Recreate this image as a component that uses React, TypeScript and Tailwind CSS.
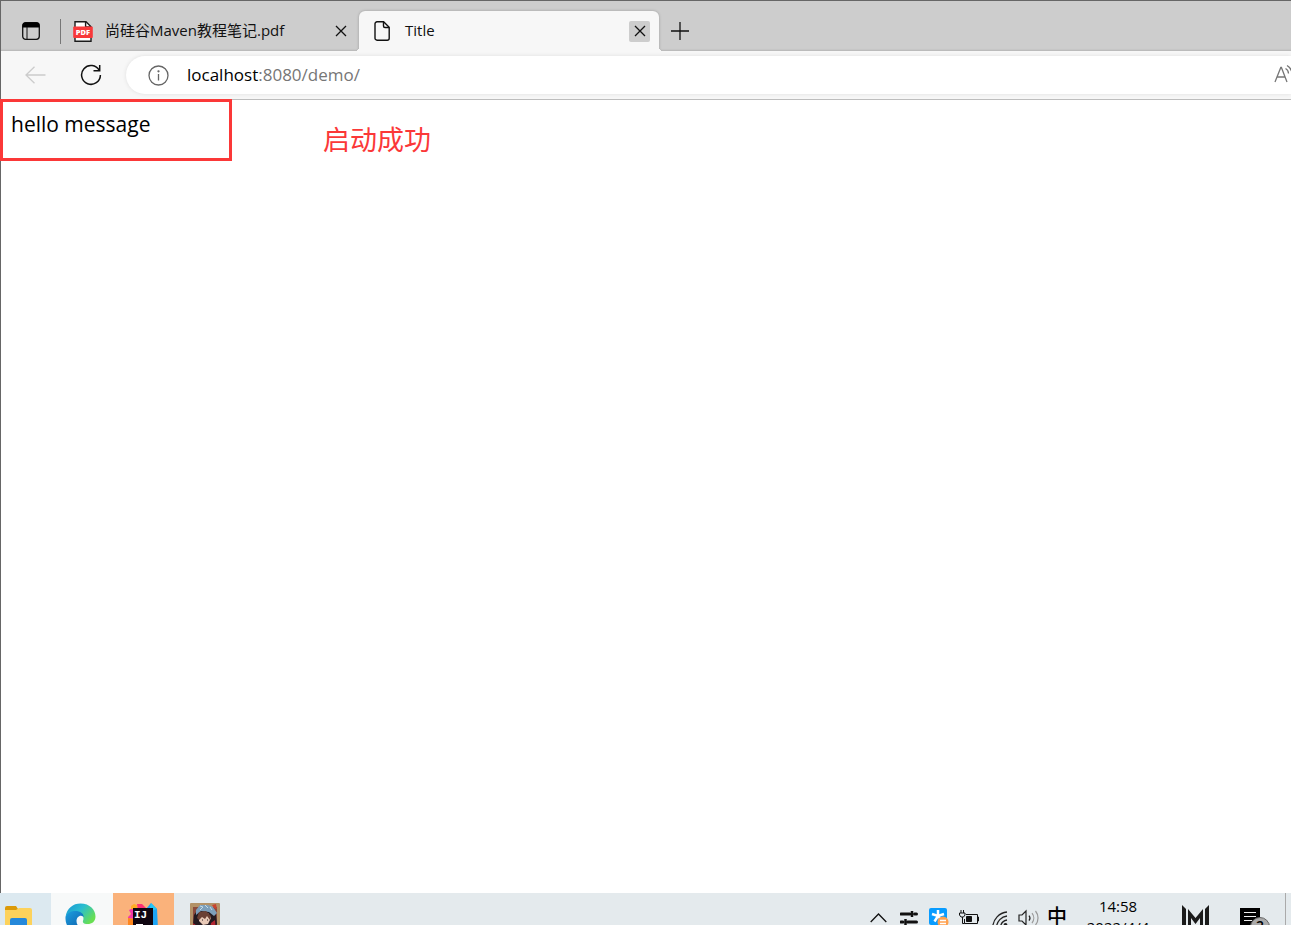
import { useState } from 'react';

type TabItem = { id: string; title: string; kind: 'pdf' | 'page' };

const initialTabs: TabItem[] = [
  { id: 'pdf', title: '尚硅谷Maven教程笔记.pdf', kind: 'pdf' },
  { id: 'demo', title: 'Title', kind: 'page' },
];

const CloseIcon = () => (
  <svg width="12" height="12" viewBox="0 0 12 12" fill="none" stroke="#111" strokeWidth="1.3">
    <path d="M1 1l10 10M11 1L1 11" />
  </svg>
);

const PdfIcon = () => (
  <svg width="20" height="21" viewBox="0 0 20 21" fill="none" className="shrink-0">
    <path d="M2 .8h11l5 5v14.4H2z" fill="#fff" stroke="#1b1b1b" strokeWidth="1.4" />
    <path d="M12.6 1v5H18" stroke="#1b1b1b" strokeWidth="1.4" />
    <rect x=".2" y="5.5" width="19.6" height="11.5" rx="1" fill="#f8383a" />
    <text x="10" y="14" textAnchor="middle" fill="#fff" fontSize="7.5" fontWeight="900" fontFamily="Open Sans, sans-serif">PDF</text>
  </svg>
);

const PageIcon = () => (
  <svg width="17" height="20" viewBox="0 0 17 20" fill="none" stroke="#111" strokeWidth="1.4" className="shrink-0">
    <path d="M3 .8h6.6l5.6 5.5v10.9a2 2 0 0 1-2 2H3a2 2 0 0 1-2-2V2.8a2 2 0 0 1 2-2z" />
    <path d="M9.5 1v4a1.5 1.5 0 0 0 1.5 1.5h4" />
  </svg>
);

function TabStrip() {
  const [tabs] = useState(initialTabs);
  return (
    <div className="flex h-[51px] items-end border-t border-[#666] bg-[#cdcdcd] shadow-[inset_0_-2px_2px_-1px_rgba(0,0,0,0.12)]">
      <button aria-label="Tab actions" className="flex h-10 w-[59px] items-center justify-center">
        <svg width="18" height="18" viewBox="0 0 18 18" fill="none">
          <rect x=".7" y=".7" width="16.6" height="16.6" rx="3" stroke="#111" strokeWidth="1.3" />
          <path d="M.5 5.5V3.5a3 3 0 0 1 3-3h11a3 3 0 0 1 3 3v2z" fill="#000" />
          <path d="M5 5v12" stroke="#111" />
        </svg>
      </button>
      <div className="mb-[7px] h-[25px] w-px bg-[#777]" />
      {tabs.map((tab) =>
        tab.kind === 'pdf' ? (
          <div key={tab.id} className="flex h-10 w-[298px] items-center pl-3 pr-2">
            <PdfIcon />
            <span className="ml-3 flex-1 truncate pb-px text-[15px] text-[#111]">{tab.title}</span>
            <button aria-label="Close tab" className="flex size-[21px] items-center justify-center"><CloseIcon /></button>
          </div>
        ) : (
          <div key={tab.id} className="relative flex h-10 w-[300px] items-center rounded-t-md bg-[#f7f7f7] pl-[15px] pr-[9px] shadow-[0_0_3px_rgba(0,0,0,0.25)] before:absolute before:bottom-0 before:-left-1 before:size-1 before:bg-[radial-gradient(circle_at_0_0,transparent_4px,#f7f7f7_4px)] after:absolute after:bottom-0 after:-right-1 after:size-1 after:bg-[radial-gradient(circle_at_100%_0,transparent_4px,#f7f7f7_4px)]">
            <PageIcon />
            <span className="ml-[14px] flex-1 pb-px text-[15px] text-[#111]">{tab.title}</span>
            <button aria-label="Close tab" className="flex size-[21px] items-center justify-center rounded-xs bg-[#cdcdcd]"><CloseIcon /></button>
          </div>
        )
      )}
      <button aria-label="New tab" className="flex h-10 w-[42px] items-center justify-center">
        <svg width="18" height="18" viewBox="0 0 18 18" stroke="#111" strokeWidth="1.3"><path d="M9 0v18M0 9h18" /></svg>
      </button>
    </div>
  );
}

function Toolbar() {
  return (
    <div className="relative flex h-[49px] items-center border-b border-[#bdbdbd] bg-[#f7f7f7] pl-[22px]">
      <button aria-label="Back" disabled className="flex w-6 justify-center">
        <svg width="21" height="18" viewBox="0 0 21 18" fill="none" stroke="#ccc" strokeWidth="1.3"><path d="M20.5 9H1M9.5 .7L1 9l8.5 8.3" /></svg>
      </button>
      <button aria-label="Refresh" className="ml-8 flex w-6 justify-center">
        <svg width="22" height="22" viewBox="0 0 22 22" fill="none" stroke="#111" strokeWidth="1.5">
          <path d="M19.3 6.5A9.4 9.4 0 1 0 20.4 11" />
          <path d="M19.7 1v5.8H13.5" />
        </svg>
      </button>
      <div className="ml-[23px] flex h-[38px] flex-1 items-center overflow-hidden rounded-l-full bg-white pl-[22px] shadow-[0_0_4px_rgba(0,0,0,0.1)]">
        <svg width="21" height="21" viewBox="0 0 21 21" fill="none" stroke="#666" strokeWidth="1.3" className="shrink-0">
          <circle cx="10.5" cy="10.5" r="9.5" />
          <path d="M10.5 9v6.5" />
          <circle cx="10.5" cy="6.3" r=".5" fill="#666" />
        </svg>
        <a href="#demo" className="ml-[18px] flex-1 pb-px text-[17px] text-[#767676]"><span className="text-black">localhost</span>:8080/demo/</a>
        <button aria-label="Read aloud" className="h-[22px] w-[17px] overflow-hidden">
          <svg width="22" height="22" viewBox="0 0 22 22" fill="none" stroke="#777" strokeWidth="1.3">
            <path d="M1 18L6.8 3.5h.6L13 18M3 13h8.2M11.5 4.5a6 6 0 0 1 3 5M13 1.5a10 10 0 0 1 5 8" />
          </svg>
        </button>
      </div>
    </div>
  );
}

const FolderIcon = () => (
  <svg width="28" height="28" viewBox="0 0 28 28">
    <path d="M0 2q0-2 2-2h9l2 3v3H0z" fill="#dc9a08" />
    <path d="M0 4h11l3-2h11q2 0 2 2v24H0z" fill="#fdd25b" />
    <path d="M5 28V14q0-2 2-2h13q2 0 2 2v14h-5v-9h-7v9z" fill="#2588da" />
  </svg>
);

const EdgeIcon = () => (
  <svg width="31" height="31" viewBox="0 0 31 31">
    <defs>
      <linearGradient id="edgeTop" x1="0" y1="0" x2="1" y2=".6">
        <stop stopColor="#1694d6" /><stop offset=".5" stopColor="#2abdd0" /><stop offset="1" stopColor="#68df52" />
      </linearGradient>
      <linearGradient id="edgeLow" x1="0" y1="0" x2="1" y2="1">
        <stop stopColor="#1b9fe0" /><stop offset="1" stopColor="#0b4d9c" />
      </linearGradient>
    </defs>
    <path d="M.5 14C2 5 8 .5 15.5 .5 25 .5 30.5 7 30.5 13.5c0 5-3.5 7.5-8 7.5-4 0-5-1.5-4.500-3 2-5-2-8-7-8-5 0-9 2-10.500 4z" fill="url(#edgeTop)" />
    <path d="M.5 14C3 9 7 8 10 8c6 0 9 3 8.5 6-3-3-7 0-7 4 0 6 6 9 13 6-3 4-7 5.5-10 5.5C6 30.5 0 23 .5 14z" fill="url(#edgeLow)" />
  </svg>
);

const IdeaIcon = () => (
  <svg width="31" height="31" viewBox="0 0 31 31">
    <path d="M1 7l6-3 8 3-2 10-14-2 4-4z" fill="#f438a8" />
    <path d="M0 15l7 1v12l-7-5z" fill="#ff861c" />
    <path d="M3 3l3-2 3 1 2 5-8-1z" fill="#ffac24" />
    <path d="M9 1l5 0 5 5-9 2z" fill="#ff3174" />
    <path d="M18 6l5-6 6 6 1 20-10 5z" fill="#1da5f5" />
    <path d="M23 0l6 6-8 3z" fill="#25c6f5" />
    <rect x="5" y="5" width="20" height="26" fill="#100611" />
    <text x="6" y="15" fill="#fff" fontSize="11" fontWeight="700" fontFamily="Liberation Mono, monospace">IJ</text>
    <path d="M8 22h7" stroke="#fff" strokeWidth="2" />
  </svg>
);

const PortraitIcon = () => (
  <svg width="30" height="30" viewBox="0 0 30 30">
    <rect width="30" height="30" rx="1" fill="#b39267" />
    <path d="M3 4h24v26H3z" fill="#8c4b3c" />
    <path d="M4 12l5-7 12 0 5 6 1 10-3 6H6l-3-6z" fill="#241a20" />
    <path d="M6 7l4-5h8l5 2 4 6-3 3-5-4-8-1-5 4z" fill="#7d9fba" />
    <path d="M10 3l3 1-3 3M15 2l3 3M20 4l2 3" stroke="#c3dbe8" fill="none" />
    <path d="M22 2l4-1 1 5-3-1z" fill="#c9432f" />
    <path d="M9 13l9-3 3 5-3 6-5 1-4-4z" fill="#e8c9b7" />
    <path d="M7 15l2-6 7-1 5 5-1 4-3-4-2 3-3-2-3 3z" fill="#6b4034" />
    <path d="M12 17h1M17 17h1" stroke="#25181c" />
    <path d="M3 20l4 3 4 7H4zM21 20l4-3 1 12h-6z" fill="#b12531" />
    <path d="M12 22l5 1 1 7h-5z" fill="#ddd" />
  </svg>
);

function Tray() {
  return (
    <div className="flex items-start">
      <button aria-label="Show hidden icons" className="mt-5 w-[30px]">
        <svg width="17" height="10" viewBox="0 0 17 10" fill="none" stroke="#111" strokeWidth="1.3"><path d="M.7 9L8.5 1l7.8 8" /></svg>
      </button>
      <button aria-label="Mixer" className="mt-[17px] w-[29px]">
        <svg width="18" height="18" viewBox="0 0 18 18" fill="none" stroke="#111" strokeWidth="3">
          <path d="M1 4h9M14.5 4h2M1 12h2M7.5 12h9" strokeLinecap="round" /><path d="M12 1v6M5.5 9v6" strokeWidth="2.5" />
        </svg>
      </button>
      <button aria-label="Cloud sync" className="mt-[15px] w-[30px]">
        <svg width="20" height="20" viewBox="0 0 20 20" fill="none">
          <rect width="18" height="17" rx="2" fill="#089cff" />
          <path d="M9 2v6M3 6l6 2 6-2M9 8L5.5 13.5M9 8l3.5 4" stroke="#fff" strokeWidth="2.5" />
          <circle cx="14" cy="14" r="5.5" fill="#ffa14f" /><path d="M11 12.5h6M11 15.5h6" stroke="#fff" strokeWidth="1.3" />
        </svg>
      </button>
      <button aria-label="Battery" className="mt-[17px] w-[33px]">
        <svg width="21" height="16" viewBox="0 0 21 16" fill="none" stroke="#111">
          <path d="M7 4.5h11.5v9h-13V9M18.5 7h1v4h-1M2 0v3M4.5 0v3M.5 3h5.5v2l-1.5 2H2L.5 5zM3.5 7v6.5h2" />
          <path d="M7.5 6.5h5v5h-5z" fill="#111" />
        </svg>
      </button>
      <button aria-label="Network" className="mt-[17px] w-[26px]">
        <svg width="18" height="18" viewBox="0 0 18 18" fill="none" stroke="#222" strokeWidth="1.3">
          <path d="M.7 17A16 16 0 0 1 15 2M4.5 17A12 12 0 0 1 15 6M8.5 17A8 8 0 0 1 15 10" /><circle cx="13.5" cy="15" r="1.3" fill="#222" />
        </svg>
      </button>
      <button aria-label="Volume" className="mt-4 w-[29px]">
        <svg width="21" height="18" viewBox="0 0 21 18" fill="none" stroke="#222" strokeWidth="1.2">
          <path d="M1 6h3l4-4v14l-4-4H1z" /><path d="M11 6.5a4 4 0 0 1 0 5" /><path d="M14 4a8 8 0 0 1 0 10M17.5 2a11 11 0 0 1 0 14" stroke="#999" />
        </svg>
      </button>
      <button aria-label="Input language" className="mt-3 w-[29px] text-left text-[20px] font-medium leading-6">中</button>
      <button className="mt-[3px] w-[84px] text-center text-[15px] leading-[21px]">
        <time className="block">14:58</time>
        <time className="block">2022/4/4</time>
      </button>
      <button aria-label="Monitor" className="ml-[22px] mt-3 w-[58px]">
        <svg width="27" height="27" viewBox="0 0 27 27" fill="#1b1b1b">
          <path d="M0 0l4 4v23H0zM27 0l-4 4v23h4z" /><path d="M6 4l7.5 9L21 4v23h-3V13l-4.5 6L9 13v14H6z" />
        </svg>
      </button>
      <button aria-label="Notifications" className="mt-[15px] w-[45px]">
        <svg width="30" height="27" viewBox="0 0 30 27">
          <path d="M0 0h20v20H0z" fill="#000" /><path d="M4 4.5h12M4 8.5h12M4 12.5h8" stroke="#eee" strokeWidth="1" />
          <circle cx="20" cy="19" r="9.5" fill="#aaa" stroke="#666" /><text x="20" y="23" textAnchor="middle" fontSize="14" fontWeight="600" fontFamily="Open Sans, sans-serif">2</text>
        </svg>
      </button>
      <div className="h-8 w-[6px] border-l border-[#aaa]" />
    </div>
  );
}

function Taskbar() {
  return (
    <footer className="flex h-8 justify-between overflow-hidden bg-[#e4eaed]">
      <div className="flex">
        <button aria-label="File Explorer" className="flex w-[51px] items-start bg-[#dce9f0] pl-[5px] pt-[13px]"><FolderIcon /></button>
        <button aria-label="Microsoft Edge" className="flex w-[62px] items-start bg-[#f7f9f9] pl-[14px] pt-[10px]"><EdgeIcon /></button>
        <button aria-label="IntelliJ IDEA" className="flex w-[61px] items-start justify-center bg-[#fab27b] pt-[10px]"><IdeaIcon /></button>
        <button aria-label="Game" className="flex w-[62px] items-start justify-center pt-[10px]"><PortraitIcon /></button>
      </div>
      <Tray />
    </footer>
  );
}

export default function App() {
  return (
    <div className="flex min-h-screen flex-col bg-white font-['Open_Sans','Noto_Sans_CJK_SC',sans-serif] text-black">
      <div className="flex flex-1 flex-col border-l border-[#666]">
        <TabStrip />
        <Toolbar />
        <main className="relative -ml-px -mt-px flex flex-1 items-start">
          <div className="h-[62px] w-[232px] border-3 border-[#fb3838] pl-2 pt-1 text-[21px] leading-9">hello message</div>
          <p className="ml-[91px] mt-[21px] text-[27px] leading-10 text-[#fb3838]">启动成功</p>
        </main>
      </div>
      <Taskbar />
    </div>
  );
}
